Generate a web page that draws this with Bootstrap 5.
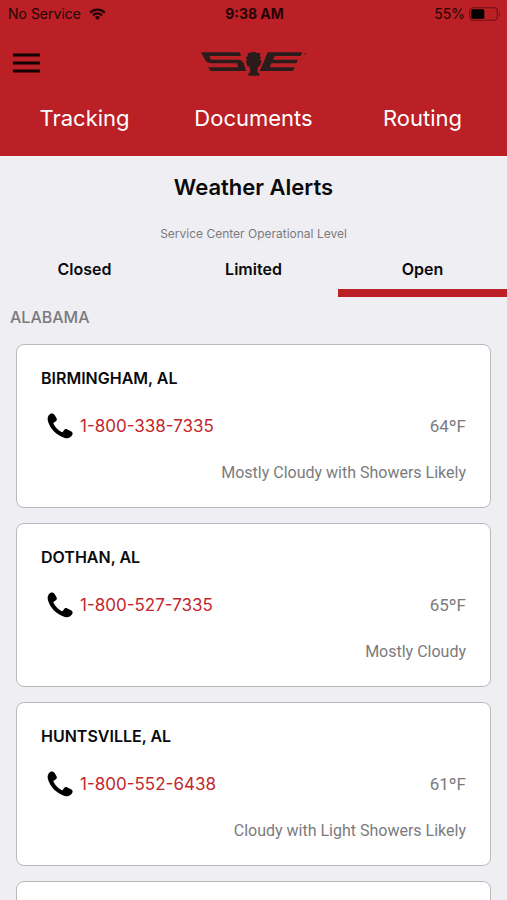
<!DOCTYPE html>
<html lang="en">
<head>
<meta charset="utf-8">
<meta name="viewport" content="width=device-width, initial-scale=1">
<title>Weather Alerts</title>
<link rel="stylesheet" href="https://cdn.jsdelivr.net/npm/bootstrap@5.3.0/dist/css/bootstrap.min.css">
<style>
  :root { --brand: #ba2025; --page: #efeef3; --muted: #7b7b7e; }
  body { font-family: Inter, "Liberation Sans", sans-serif; font-size: 16px; line-height: 24px; background: var(--page); color: #0a0a0c; }
  .app-header { background: var(--brand); border-bottom: 1px solid #faf3f4; }
  .status-bar { font-size: 14px; line-height: 28px; color: #250406; padding: 0 6px 0 8px; }
  .brand-bar { height: 70px; padding: 0 12px; }
  .main-nav { padding-bottom: 18px; }
  .main-nav .nav-link { color: #fff; font-size: 22px; line-height: 40px; padding: 0; }
  .page-title { font-size: 22px; line-height: 32px; font-weight: 600; padding-top: 14px; }
  .subtitle { font-size: 12px; line-height: 20px; color: var(--muted); padding-top: 21px; }
  .level-tab { border: 0; border-bottom: 8px solid transparent; background: none; font-weight: 600; line-height: 24px; padding: 13px 0 8px; color: inherit; }
  .level-tab.active { border-bottom-color: var(--brand); }
  .state-name { font-size: 16px; line-height: 24px; font-weight: 500; color: var(--muted); padding: 8px 10px 15px; }
  .center-list { overflow-y: auto; scrollbar-width: none; padding: 0 16px 16px; gap: 15px; }
  .center-card { flex: none; border: 1px solid #b9b9bc; border-radius: 8px; background: #fff; padding: 10px 24px 11px; min-height: 164px; }
  .center-row { min-height: 47px; }
  .center-name { font-size: 16px; font-weight: 600; }
  .phone-link { color: #c2272d; font-size: 17px; gap: 7px; padding-left: 6px; }
  .reading { font-family: Roboto, Inter, sans-serif; font-size: 17px; color: var(--muted); }
  .conditions { font-size: 16px; }
</style>
</head>
<body class="vh-100 overflow-hidden d-flex flex-column">
<svg class="d-none" aria-hidden="true">
  <symbol id="phone" viewBox="0 0 26 26">
    <path d="M3.500.8C5.200 0 6.600.5 7.600 2L9.400 5c.8 1.500.5 2.600-.8 3.400L7 9.400c-.6.400-.7.900-.4 1.600 1.800 3.600 4.300 6.100 7.900 7.900.7.400 1.200.3 1.600-.3l1-1.500c.8-1.200 1.900-1.400 3.300-.7l3.600 1.800c1.700.9 2 2.200 1.200 3.900-1.400 2.700-4.200 3.700-7.400 2.800C9.600 22.600 2.900 15.600.9 8 .100 4.800 1.100 2.100 3.500.8z"/>
  </symbol>
</svg>

<header class="app-header flex-shrink-0">
  <div class="status-bar row g-0">
    <div class="col d-flex align-items-center gap-2">
      <span>No Service</span>
      <svg width="17" height="12" viewBox="0 0 17 12" aria-hidden="true"><path d="M1.200 4.600a10.500 10.500 0 0 1 14.600 0M3.900 7.300a6.700 6.700 0 0 1 9.200 0" fill="none" stroke="#250406" stroke-width="2.300"/><path d="M5.800 9.200a4 4 0 0 1 5.400 0L8.500 12z" fill="#250406"/></svg>
    </div>
    <div class="col-auto fw-bold">9:38 AM</div>
    <div class="col d-flex align-items-center justify-content-end gap-1">
      <span>55%</span>
      <svg width="32" height="14" viewBox="0 0 32 14" aria-hidden="true"><rect x=".7" y=".7" width="27.600" height="12.600" rx="3.500" fill="none" stroke="#6f1014" stroke-width="1.100"/><rect x="2.300" y="2.300" width="13" height="9.400" rx="1.500"/><path d="M29.800 4.500q2 2.500 0 5z" fill="#6f1014"/></svg>
    </div>
  </div>
  <div class="brand-bar row g-0 align-items-center">
    <div class="col d-flex">
      <button type="button" class="btn d-flex border-0 p-0" aria-label="Menu">
        <svg width="28" height="20" viewBox="0 0 28 20" aria-hidden="true"><path d="M1 2h27M1 10h27M1 18h27" stroke="#120102" stroke-width="3"/></svg>
      </button>
    </div>
    <div class="col-auto">
      <svg class="d-block" width="106" height="26" viewBox="0 -6 318 78" role="img" aria-label="Company logo" fill="#2b1c1c">
        <path d="M0 1H116L120 12H25L30 23H112Q123 24 128 34L136 57H29L21 46H112L108 34H28Q17 33 13 25Z"/>
        <path d="M141 2H149L152 0H163L166 3H179L176 12L181 17L176 24L182 26L177 42L171 45L169 61L175 64V71H142V64L148 61L146 45L139 42L134 26L139 24L134 17L140 12Z"/>
        <path d="M200 1H304L299 12H221L216 23H291L286 34H211L206 46H281L276 57H176L188 30Z"/>
        <circle cx="312" cy="5" r="3" opacity=".5"/>
      </svg>
    </div>
    <div class="col"></div>
  </div>
  <nav class="main-nav row g-0 text-center" aria-label="Main">
    <a class="nav-link col" href="#">Tracking</a>
    <a class="nav-link col" href="#">Documents</a>
    <a class="nav-link col" href="#">Routing</a>
  </nav>
</header>

<main class="d-flex flex-column flex-grow-1 overflow-hidden">
  <h1 class="page-title text-center m-0">Weather Alerts</h1>
  <p class="subtitle text-center m-0">Service Center Operational Level</p>
  <div class="row g-0 flex-shrink-0" role="tablist" aria-label="Service Center Operational Level">
    <button type="button" class="level-tab col" role="tab" aria-selected="false">Closed</button>
    <button type="button" class="level-tab col" role="tab" aria-selected="false">Limited</button>
    <button type="button" class="level-tab col active" role="tab" aria-selected="true">Open</button>
  </div>
  <h2 class="state-name m-0">ALABAMA</h2>
  <div class="center-list d-flex flex-column flex-grow-1">
    <article class="center-card">
      <h3 class="center-name center-row d-flex align-items-center m-0">BIRMINGHAM, AL</h3>
      <div class="center-row d-flex align-items-center justify-content-between">
        <a class="phone-link d-flex align-items-center text-decoration-none" href="tel:18003387335"><svg width="26" height="26" aria-hidden="true"><use href="#phone"/></svg>1-800-338-7335</a>
        <span class="reading">64ºF</span>
      </div>
      <div class="reading conditions center-row d-flex align-items-center justify-content-end">Mostly Cloudy with Showers Likely</div>
    </article>
    <article class="center-card">
      <h3 class="center-name center-row d-flex align-items-center m-0">DOTHAN, AL</h3>
      <div class="center-row d-flex align-items-center justify-content-between">
        <a class="phone-link d-flex align-items-center text-decoration-none" href="tel:18005277335"><svg width="26" height="26" aria-hidden="true"><use href="#phone"/></svg>1-800-527-7335</a>
        <span class="reading">65ºF</span>
      </div>
      <div class="reading conditions center-row d-flex align-items-center justify-content-end">Mostly Cloudy</div>
    </article>
    <article class="center-card">
      <h3 class="center-name center-row d-flex align-items-center m-0">HUNTSVILLE, AL</h3>
      <div class="center-row d-flex align-items-center justify-content-between">
        <a class="phone-link d-flex align-items-center text-decoration-none" href="tel:18005526438"><svg width="26" height="26" aria-hidden="true"><use href="#phone"/></svg>1-800-552-6438</a>
        <span class="reading">61ºF</span>
      </div>
      <div class="reading conditions center-row d-flex align-items-center justify-content-end">Cloudy with Light Showers Likely</div>
    </article>
    <article class="center-card"></article>
  </div>
</main>
<script src="https://cdn.jsdelivr.net/npm/bootstrap@5.3.0/dist/js/bootstrap.bundle.min.js"></script>
</body>
</html>
